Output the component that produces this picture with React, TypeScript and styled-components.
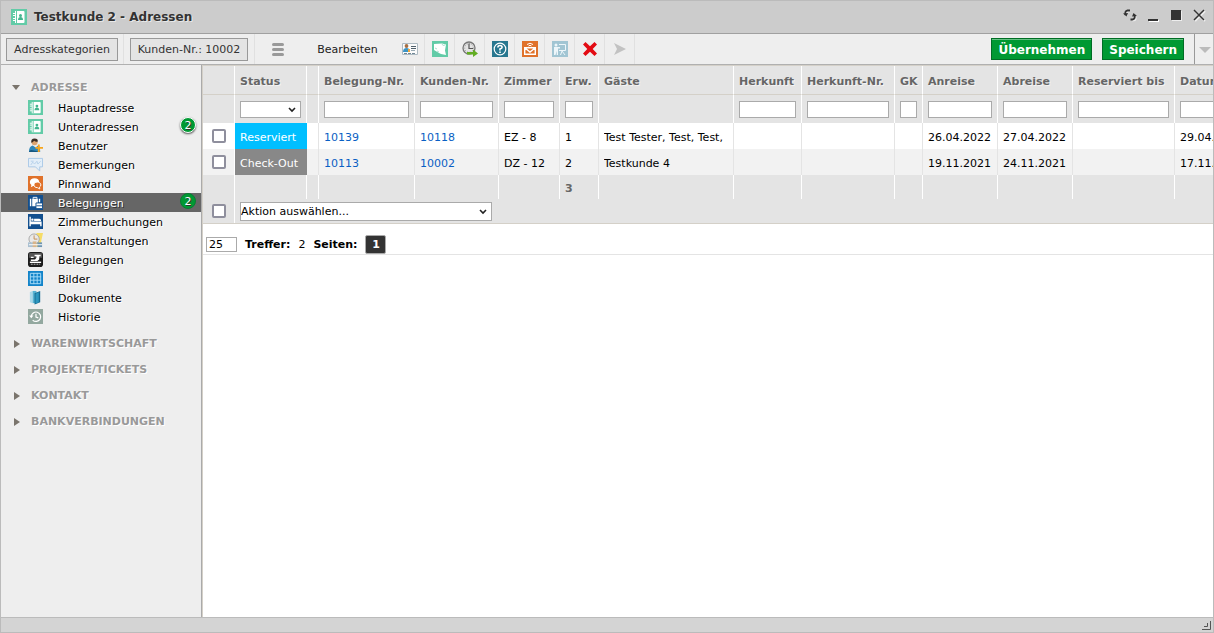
import React from "react";
import styled, { createGlobalStyle, css } from "styled-components";

const GlobalStyle = createGlobalStyle`
  *, *::before, *::after { box-sizing: border-box; }
  body {
    margin: 0;
    background: #fff;
    color: #000;
    font: 11px/14px "DejaVu Sans", Verdana, sans-serif;
  }
  button, input, select { font: inherit; color: inherit; }
  svg { display: block; flex: none; }
`;

/* ---------- window frame ---------- */

const Window = styled.div`
  display: flex;
  flex-direction: column;
  min-height: 100vh;
  border: 1px solid #bbb;
  overflow: hidden;
`;

const TitleBar = styled.header`
  display: flex;
  align-items: center;
  gap: 7px;
  height: 33px;
  padding: 0 6px 0 10px;
  background: #ccc;
  border-bottom: 1px solid #a0a0a0;
`;

const Title = styled.h1`
  flex: 1;
  margin: 0;
  font-size: 12px;
  line-height: 16px;
  font-weight: bold;
  color: #333;
  text-shadow: 1px 1px 0 #e8e8e8;
`;

const WindowControls = styled.div`
  display: flex;
  align-items: center;
  gap: 7px;
  padding-bottom: 4px;
`;

const IconButton = styled.button`
  display: flex;
  align-items: center;
  justify-content: center;
  width: 16px;
  height: 16px;
  padding: 0;
  border: 0;
  background: none;
`;

const Toolbar = styled.div`
  display: flex;
  align-items: stretch;
  height: 31px;
  background: #eee;
  border-bottom: 1px solid #b0b0b0;
`;

const ToolGroup = styled.div<{ $width?: number }>`
  display: flex;
  align-items: center;
  justify-content: center;
  width: ${(p) => (p.$width ? `${p.$width}px` : "auto")};
  border-right: 1px solid #e0e0e0;
`;

const PlainGroup = styled(ToolGroup)`
  border-right: 0;
`;

const Actions = styled.div`
  display: flex;
  align-items: center;
  gap: 10px;
  margin-left: auto;
  padding-right: 10px;
`;

const OutlineButton = styled.button`
  height: 23px;
  padding: 2px 7px 0;
  border: 1px solid #999;
  background: #e4e4e4;
  color: #333;
  white-space: nowrap;
`;

const TextButton = styled.button`
  padding: 2px 0 0;
  border: 0;
  background: none;
  color: #222;
`;

const GreenButton = styled.button`
  height: 22px;
  padding: 1px 6px 0;
  border: 1px solid #006d25;
  background: #093;
  box-shadow: inset 0 1px 0 #66c285;
  color: #fff;
  font-size: 12px;
  font-weight: bold;
  white-space: nowrap;
`;

const MoreButton = styled.button`
  display: flex;
  align-items: center;
  width: 19px;
  padding: 2px 0 0 4px;
  border: 0;
  border-left: 1px solid #999;
  background: none;
`;

const Body = styled.div`
  display: flex;
  flex: 1;
`;

const StatusBar = styled.footer`
  display: flex;
  justify-content: flex-end;
  align-items: flex-end;
  height: 15px;
  padding: 0 2px 2px 0;
  background: #d4d4d4;
  border-top: 1px solid #bbb;
`;

/* ---------- sidebar ---------- */

const Sidebar = styled.nav`
  flex: none;
  width: 201px;
  padding-top: 7px;
  background: #eee;
  border-right: 1px solid #aaa;
`;

const Section = styled.section`
  padding-top: 4px;
`;

const SectionToggle = styled.button`
  display: flex;
  align-items: center;
  gap: 10px;
  width: 100%;
  height: 22px;
  padding: 1px 0 0 10px;
  border: 0;
  background: none;
  color: #999;
  font-weight: bold;
  text-shadow: 1px 1px 0 #fff;
`;

const List = styled.ul`
  margin: 0;
  padding: 0 0 2px;
  list-style: none;
`;

const Item = styled.li`
  position: relative;
`;

const ItemLink = styled.a<{ $active?: boolean }>`
  display: flex;
  align-items: center;
  gap: 15px;
  height: 19px;
  padding-left: 27px;
  text-decoration: none;
  color: ${(p) => (p.$active ? "#fff" : "#000")};
  background: ${(p) => (p.$active ? "#666" : "transparent")};
  text-shadow: ${(p) => (p.$active ? "1px 1px 0 #333" : "1px 1px 0 #fff")};
`;

const ItemLabel = styled.span`
  padding-top: 2px;
`;

const Badge = styled.span<{ $active?: boolean }>`
  position: absolute;
  top: 0;
  right: 5px;
  width: 16px;
  height: 16px;
  border: ${(p) => (p.$active ? "1px solid #087d33" : "1px solid #fff")};
  border-radius: 50%;
  background: #093;
  box-shadow: ${(p) => (p.$active ? "none" : "0 1px 2px #555")};
  color: #fff;
  line-height: 15px;
  text-align: center;
  text-shadow: 1px 1px 0 #333;
`;

/* ---------- table ---------- */

const Main = styled.main`
  flex: 1;
  min-width: 0;
  overflow: hidden;
  background: #fff;
  border-left: 1px solid #d4d0c8;
`;

const Grid = styled.table`
  width: 100%;
  min-width: 1100px;
  table-layout: fixed;
  border-collapse: separate;
  border-spacing: 0;
  border-top: 1px solid #d4d0c8;
  border-bottom: 1px solid #d4d0c8;
  background: #e4e4e4;
`;

const cell = css`
  padding: 0 4px 0 5px;
  border-right: 1px solid #fff;
  text-align: left;
  white-space: nowrap;
  overflow: hidden;
`;

const HeadCell = styled.th`
  ${cell}
  height: 29px;
  padding-top: 4px;
  border-bottom: 1px solid #d4d0c8;
  color: #666;
  font-weight: bold;
  text-shadow: 1px 1px 0 #f4f4f4;
`;

const FilterCell = styled.td`
  ${cell}
  height: 28px;
  padding-right: 5px;
`;

const DataCell = styled.td<{ $fill?: string; $check?: boolean }>`
  ${cell}
  height: 26px;
  padding-top: ${(p) => (p.$check ? 0 : 3)}px;
  border-right-color: ${(p) => (p.$check ? "#fff" : "#e4e4e4")};
  ${(p) => p.$fill && `background: ${p.$fill}; color: #fff; border-right-color: ${p.$fill};`}
`;

const DataRow = styled.tr<{ $alt?: boolean }>`
  background: ${(p) => (p.$alt ? "#f2f2f2" : "#fff")};
`;

const ClipText = styled.div`
  overflow: hidden;
`;

const SumCell = styled.td`
  ${cell}
  height: 24px;
  padding-top: 3px;
  color: #666;
  font-weight: bold;
`;

const ActionCell = styled.td<{ $last?: boolean }>`
  ${cell}
  height: 24px;
  ${(p) => p.$last && "border-right: 0;"}
`;

const FilterInput = styled.input`
  display: block;
  width: 100%;
  height: 17px;
  padding: 0 2px;
  border: 1px solid #aaa;
  background: #fff;
`;

const CheckInput = styled.input.attrs({ type: "checkbox" })`
  display: block;
  appearance: none;
  width: 14px;
  height: 14px;
  margin: 0 0 0 4px;
  border: 2px solid #8f8f9d;
  border-radius: 2px;
  background: #fff;
`;

const SelectWrap = styled.div<{ $width?: number }>`
  position: relative;
  width: ${(p) => (p.$width ? `${p.$width}px` : "auto")};
  svg {
    position: absolute;
    top: 50%;
    right: 5px;
    margin-top: -2px;
    pointer-events: none;
  }
`;

const SelectInput = styled.select<{ $tall?: boolean }>`
  display: block;
  appearance: none;
  width: 100%;
  height: ${(p) => (p.$tall ? 19 : 17)}px;
  padding: 1px 16px 0 0;
  border: 1px solid #aaa;
  border-radius: 0;
  background: #fff;
`;

const CellLink = styled.a`
  color: #0a5fc4;
  text-decoration: none;
`;

const Pager = styled.div`
  display: flex;
  align-items: center;
  gap: 8px;
  height: 31px;
  padding: 10px 0 0 3px;
  border-bottom: 1px solid #e4e4e4;
`;

const PagerText = styled.span`
  display: flex;
  gap: 8px;
  padding-top: 2px;
`;

const CountInput = styled.input`
  width: 31px;
  height: 15px;
  padding: 1px 2px 0;
  border: 1px solid #aaa;
`;

const PageButton = styled.button`
  width: 21px;
  height: 19px;
  padding: 1px 0 0;
  border: 1px solid #aaa;
  border-radius: 2px;
  background: #333;
  color: #fff;
  font-weight: bold;
`;

/* ---------- icons ---------- */

type IconProps = { size?: number };

const Svg = ({ size = 15, children }: IconProps & { children: React.ReactNode }) => (
  <svg width={size} height={size} viewBox="0 0 16 16" aria-hidden="true">
    {children}
  </svg>
);

const AddressIcon = ({ size }: IconProps) => (
  <Svg size={size}>
    <path fill="#62cba7" d="M0 0h16v16H0z" />
    <path fill="#fff" d="M4 2h8.5q1 0 1 1v10q0 1-1 1H4z" />
    <path stroke="#fff" d="M2 4.5h3M2 6.5h3M2 9.5h3M2 11.5h3" />
    <path stroke="#62cba7" d="M5.5 2v12" />
    <circle cx="9.5" cy="6.5" r="1.5" fill="#43b58e" />
    <path fill="#43b58e" d="M7 11q0-3 2.500-3t2.500 3z" />
  </Svg>
);

const UserIcon = () => (
  <Svg>
    <circle cx="7" cy="4.500" r="3.200" fill="#dda46f" />
    <path fill="#3a2c24" d="M3.500 5Q3 .5 7 .5T10.300 4Q8 4.500 6.500 3 5 5 3.500 5z" />
    <path fill="#2f86b8" d="M1 15q0-6 4-7l3 2 3-2q2 1 2 7z" />
    <path fill="#17577f" d="M1 15q1-3 4-2l8 2z" />
    <path fill="#f7a51c" d="M10.500 7h2v2.500H16v2h-3.500V15h-2v-3.500H8v-2h2.500z" />
  </Svg>
);

const RemarkIcon = () => (
  <Svg>
    <path fill="#e3eef8" stroke="#a9c8e6" d="M.5 1.500h15v9h-3V15L8 10.500H.5z" />
    <path fill="none" stroke="#b5d0ea" d="M3 8.500l2-3 2 2 2.500-3 1 3 3-3M3 4.500h3" />
  </Svg>
);

const PinIcon = () => (
  <Svg>
    <path fill="#e0722b" d="M0 0h16v16H0z" />
    <path fill="#fff" d="M7 2.500c-3 0-5 1.700-5 4 0 1.400.6 2.300 1.600 3L3 12l2.500-1.400H7c3 0 5-1.700 5-4s-2-4.100-5-4.100z" />
    <path fill="#e0722b" stroke="#fff" d="M10 6.500c-2.200 0-3.700 1.200-3.700 3s1.500 2.900 3.700 2.900l2.500 1.400-.2-2c.9-.6 1.400-1.300 1.400-2.300 0-1.800-1.500-3-3.700-3z" />
  </Svg>
);

const LuggageIcon = () => (
  <Svg>
    <path fill="#124f8e" d="M0 0h16v16H0z" />
    <path fill="none" stroke="#fff" d="M5.500 4V2.500h4V4" />
    <path fill="#fff" d="M2 4h1.500v8H2zM4.500 4h6v8h-6zM11.500 4H13v4h-1.500z" />
    <path fill="#fff" stroke="#124f8e" d="M8.500 8.500h7v6h-7z" />
    <path stroke="#124f8e" d="M9 11.500h6" />
  </Svg>
);

const BedIcon = () => (
  <Svg>
    <path fill="#124f8e" d="M0 0h16v16H0z" />
    <path fill="#fff" d="M1.500 3H3v5h11.500v5H13v-2H3v2H1.500zM6.500 5H12q2 0 2 2.500H6.500z" />
    <circle cx="4.700" cy="6" r="1.300" fill="#fff" />
  </Svg>
);

const EventIcon = () => (
  <Svg>
    <path fill="#f6dc66" d="M9 0h7l-2 9 1 6H9z" />
    <circle cx="6.500" cy="6.500" r="5.500" fill="#e9e9e9" stroke="#a7a7a7" />
    <path fill="none" stroke="#c48b4d" d="M6.500 2.500v4H10" />
    <path fill="#a9bfd0" d="M0 10h9v5H0z" />
    <path fill="#d8b48a" d="M5 9h4v6H5z" />
    <path fill="#6e95b3" d="M10 10h5v5h-5z" />
    <path stroke="#fff" d="M1 12.500h14" />
  </Svg>
);

const DeskIcon = () => (
  <Svg>
    <rect width="16" height="16" rx="3" fill="#1c1c1c" />
    <path fill="#555" d="M2 1h12q1 0 1 2v3H1V3q0-2 1-2z" />
    <path fill="#fff" d="M7 3h6.500v1.500H12V8l-2 1.500H3V8h4.500L9 6V4.500H7zM3 5h3v1.500H3z" />
    <path stroke="#fff" strokeWidth="1.500" d="M2 11h12" />
    <path stroke="#ccc" strokeDasharray="2 1" d="M3 13h10" />
  </Svg>
);

const PicturesIcon = () => (
  <Svg>
    <path fill="#1384c9" d="M0 0h16v16H0z" />
    <path fill="none" stroke="#a6dcf8" d="M2.500 2.500h11v11h-11zM6.200 2v12M9.800 2v12M2 6.200h12M2 9.800h12" />
  </Svg>
);

const DocumentsIcon = () => (
  <Svg>
    <path fill="#a9d9ea" d="M2 2l3-1v13l-3-1z" />
    <path fill="#56b2d2" d="M5 1h4v13H5z" />
    <path fill="#146c93" d="M7 3.500L13 1v12l-6 2.500z" />
    <path fill="#2c97bf" d="M8 4l3.500-1.500V13L8 14.500z" />
  </Svg>
);

const HistoryIcon = () => (
  <Svg>
    <path fill="#93a89f" d="M0 0h16v16H0z" />
    <path fill="none" stroke="#fff" strokeWidth="1.300" d="M3.500 8A5 5 0 1 1 5 11.800M8.500 5v3.500l2.500 1" />
    <path fill="#fff" d="M1.300 7h4.400L3.500 9.800z" />
  </Svg>
);

const CardIcon = () => (
  <Svg size={16}>
    <path fill="#fbfbfb" stroke="#aebbc3" d="M.5 2.500h15v11H.5z" />
    <circle cx="4.500" cy="5" r="1.900" fill="#a66f43" />
    <path fill="#3b94c5" d="M1 11q0-4 3.500-4T8 11z" />
    <path fill="#f0a73a" d="M6 8h2v3H6z" />
    <path stroke="#50606b" d="M9 5.500h5M9 7.500h5" />
    <path stroke="#708795" strokeDasharray="3 1" d="M2 12.500h12" />
    <path stroke="#9aabb5" d="M9 9.500h4" />
  </Svg>
);

const NoteIcon = () => (
  <Svg size={16}>
    <path fill="#62cba7" d="M0 0h16v16H0z" />
    <path fill="#fff" d="M2 3l8-.5 4 1-1 6 1 4.500-5-1-2-1-5-3z" />
    <path fill="none" stroke="#a9e2cf" d="M10 3l1 1.500 2-.5M3 7l2 1M5 10l2 1" />
  </Svg>
);

const ClockIcon = () => (
  <Svg size={16}>
    <circle cx="7" cy="7" r="6" fill="#e4e4e4" stroke="#777" strokeWidth="1.300" />
    <circle cx="7" cy="7" r="4.300" fill="none" stroke="#999" strokeDasharray="1 1.500" />
    <path fill="none" stroke="#555" strokeWidth="1.200" d="M7 2.500v5h4" />
    <path fill="#62ad22" d="M5 11h6V8.500l5 4-5 3.500v-2.500H5z" />
  </Svg>
);

const HelpIcon = () => (
  <Svg size={16}>
    <path fill="#28778f" d="M0 0h16v16H0z" />
    <circle cx="8" cy="8" r="5.800" fill="none" stroke="#fff" strokeWidth="1.200" />
    <path fill="none" stroke="#fff" strokeWidth="1.600" d="M5.900 6.500q0-2 2.100-2t2.100 1.800Q10.100 7.500 8 8v1.500M8 10.500V12" />
  </Svg>
);

const MailIcon = () => (
  <Svg size={16}>
    <path fill="#e0722b" d="M0 0h16v16H0z" />
    <path fill="none" stroke="#fff" strokeWidth="1.400" d="M2.700 6.700h10.600v6.600H2.700zM3 7l5 4 5-4" />
    <path fill="none" stroke="#fff" d="M5 3.500q3-2.500 6 0M6.500 5q1.500-1.500 3 0" />
  </Svg>
);

const TrainingIcon = () => (
  <Svg size={16}>
    <path fill="#a1c5d3" d="M0 0h16v16H0z" />
    <circle cx="4" cy="4" r="1.500" fill="#edf6fa" />
    <path fill="#edf6fa" d="M2 6h6v1.500H6V14H4.700v-4L3.500 14H2z" />
    <path fill="none" stroke="#edf6fa" d="M7 3.500h6.500v6H7M8.500 14l1.500-4 3 4" />
  </Svg>
);

const DeleteIcon = () => (
  <Svg size={16}>
    <path fill="#e30b13" d="M1 3.500L3.500 1 8 5.300 12.500 1 15 3.500 10.700 8l4.300 4.500-2.500 2.500L8 10.700 3.500 15 1 12.500 5.300 8z" />
  </Svg>
);

const SendIcon = () => (
  <Svg size={16}>
    <path fill="#c2c2c2" d="M2 2l12 6-12 6 3-6z" />
  </Svg>
);

const MenuIcon = () => (
  <svg width="12" height="13" viewBox="0 0 12 13" aria-hidden="true">
    <path stroke="#999" strokeWidth="3" strokeLinecap="round" d="M1.500 1.500h9M1.500 6.500h9M1.500 11.500h9" />
  </svg>
);

const Chevron = () => (
  <svg width="8" height="6" viewBox="0 0 8 6" aria-hidden="true">
    <path fill="none" stroke="#222" strokeWidth="1.600" d="M1 1l3 3 3-3" />
  </svg>
);

const Caret = ({ open }: { open?: boolean }) => (
  <svg width="10" height="10" viewBox="0 0 10 10" aria-hidden="true">
    <path fill="#7a746c" d={open ? "M1 2h8L5 7z" : "M3 1l6 4-6 4z"} />
  </svg>
);

const ReloadIcon = () => (
  <Svg size={16}>
    <g fill="none" stroke="#eee" strokeWidth="1.600" transform="translate(1 1)">
      <path d="M7 3.500H5Q2.500 4 3.500 8M9 12.500h2Q13.500 12 12.500 8" />
    </g>
    <path fill="none" stroke="#333" strokeWidth="1.800" d="M8 3.500H5.500Q2.500 4 3.500 8M8.500 12.500h2Q13.500 12 12.500 8" />
    <path fill="#333" d="M1 6.500l5-.5-1.500 3.500zM10 9.500L15 9l-3.500-3z" />
  </Svg>
);

/* ---------- data ---------- */

const navItems = [
  { label: "Hauptadresse", icon: <AddressIcon /> },
  { label: "Unteradressen", icon: <AddressIcon />, count: 2 },
  { label: "Benutzer", icon: <UserIcon /> },
  { label: "Bemerkungen", icon: <RemarkIcon /> },
  { label: "Pinnwand", icon: <PinIcon /> },
  { label: "Belegungen", icon: <LuggageIcon />, count: 2, active: true },
  { label: "Zimmerbuchungen", icon: <BedIcon /> },
  { label: "Veranstaltungen", icon: <EventIcon /> },
  { label: "Belegungen", icon: <DeskIcon /> },
  { label: "Bilder", icon: <PicturesIcon /> },
  { label: "Dokumente", icon: <DocumentsIcon /> },
  { label: "Historie", icon: <HistoryIcon /> },
];

const closedSections = ["WARENWIRTSCHAFT", "PROJEKTE/TICKETS", "KONTAKT", "BANKVERBINDUNGEN"];

const tools = [
  { label: "Visitenkarte", icon: <CardIcon /> },
  { label: "Notiz", icon: <NoteIcon /> },
  { label: "Wiedervorlage", icon: <ClockIcon /> },
  { label: "Hilfe", icon: <HelpIcon /> },
  { label: "E-Mail", icon: <MailIcon /> },
  { label: "Schulung", icon: <TrainingIcon /> },
  { label: "Löschen", icon: <DeleteIcon /> },
  { label: "Senden", icon: <SendIcon /> },
];

type Column = { label: string; width?: number; filter: "input" | "select" | "none" };

const columns: Column[] = [
  { label: "Status", width: 72, filter: "select" },
  { label: "", width: 12, filter: "none" },
  { label: "Belegung-Nr.", width: 96, filter: "input" },
  { label: "Kunden-Nr.", width: 84, filter: "input" },
  { label: "Zimmer", width: 61, filter: "input" },
  { label: "Erw.", width: 39, filter: "input" },
  { label: "Gäste", width: 135, filter: "none" },
  { label: "Herkunft", width: 68, filter: "input" },
  { label: "Herkunft-Nr.", width: 93, filter: "input" },
  { label: "GK", width: 28, filter: "input" },
  { label: "Anreise", width: 75, filter: "input" },
  { label: "Abreise", width: 75, filter: "input" },
  { label: "Reserviert bis", width: 102, filter: "input" },
  { label: "Datum", filter: "input" },
];

const bookings = [
  {
    status: "Reserviert", color: "#00bfff", booking: "10139", customer: "10118", room: "EZ - 8",
    adults: 1, guests: "Test Tester, Test, Test,", from: "26.04.2022", to: "27.04.2022", date: "29.04.2022",
  },
  {
    status: "Check-Out", color: "#888", booking: "10113", customer: "10002", room: "DZ - 12",
    adults: 2, guests: "Testkunde 4", from: "19.11.2021", to: "24.11.2021", date: "17.11.2021",
  },
];

/* ---------- view ---------- */

const BookingTable = () => (
  <Grid>
    <colgroup>
      <col width={32} />
      {columns.map((c, i) => (
        <col key={i} width={c.width} />
      ))}
    </colgroup>
    <thead>
      <tr>
        <HeadCell />
        {columns.map((c, i) => (
          <HeadCell key={i} scope="col">{c.label}</HeadCell>
        ))}
      </tr>
      <tr>
        <FilterCell />
        {columns.map((c, i) => (
          <FilterCell key={i}>
            {c.filter === "input" && <FilterInput aria-label={c.label} />}
            {c.filter === "select" && (
              <SelectWrap $width={61}>
                <SelectInput aria-label={c.label}>
                  <option />
                </SelectInput>
                <Chevron />
              </SelectWrap>
            )}
          </FilterCell>
        ))}
      </tr>
    </thead>
    <tbody>
      {bookings.map((b, i) => (
        <DataRow key={b.booking} $alt={i % 2 === 1}>
          <DataCell $check><CheckInput aria-label={b.booking} /></DataCell>
          <DataCell $fill={b.color}>{b.status}</DataCell>
          <DataCell />
          <DataCell><CellLink href="#">{b.booking}</CellLink></DataCell>
          <DataCell><CellLink href="#">{b.customer}</CellLink></DataCell>
          <DataCell>{b.room}</DataCell>
          <DataCell>{b.adults}</DataCell>
          <DataCell><ClipText>{b.guests}</ClipText></DataCell>
          <DataCell />
          <DataCell />
          <DataCell />
          <DataCell>{b.from}</DataCell>
          <DataCell>{b.to}</DataCell>
          <DataCell />
          <DataCell>{b.date}</DataCell>
        </DataRow>
      ))}
    </tbody>
    <tfoot>
      <tr>
        <SumCell />
        {columns.map((c, i) => (
          <SumCell key={i}>{c.label === "Erw." ? 3 : null}</SumCell>
        ))}
      </tr>
      <tr>
        <ActionCell><CheckInput aria-label="Alle auswählen" /></ActionCell>
        <ActionCell $last colSpan={columns.length}>
          <SelectWrap $width={252}>
            <SelectInput $tall aria-label="Aktion">
              <option>Aktion auswählen...</option>
            </SelectInput>
            <Chevron />
          </SelectWrap>
        </ActionCell>
      </tr>
    </tfoot>
  </Grid>
);

export default function App() {
  return (
    <>
      <GlobalStyle />
      <Window>
        <TitleBar>
          <AddressIcon size={16} />
          <Title>Testkunde 2 - Adressen</Title>
          <WindowControls>
            <IconButton aria-label="Neu laden"><ReloadIcon /></IconButton>
            <IconButton aria-label="Minimieren">
              <Svg size={16}><path fill="#fff" d="M4 13h10v2H4z" /><path fill="#333" d="M3 12h10v2H3z" /></Svg>
            </IconButton>
            <IconButton aria-label="Maximieren">
              <Svg size={16}><path fill="#eee" d="M4 4h10v10H4z" /><path fill="#333" d="M3 3h10v10H3z" /></Svg>
            </IconButton>
            <IconButton aria-label="Schließen">
              <Svg size={16}>
                <path stroke="#eee" strokeWidth="2" d="M4 4l10 10M14 4L4 14" />
                <path stroke="#333" strokeWidth="1.500" d="M3 3l10 10M13 3L3 13" />
              </Svg>
            </IconButton>
          </WindowControls>
        </TitleBar>

        <Toolbar>
          <ToolGroup $width={123}><OutlineButton>Adresskategorien</OutlineButton></ToolGroup>
          <ToolGroup $width={131}><OutlineButton>Kunden-Nr.: 10002</OutlineButton></ToolGroup>
          <PlainGroup $width={45}>
            <IconButton aria-label="Menü"><MenuIcon /></IconButton>
          </PlainGroup>
          <PlainGroup $width={95}><TextButton>Bearbeiten</TextButton></PlainGroup>
          {tools.map((t) => (
            <ToolGroup key={t.label} $width={30}>
              <IconButton aria-label={t.label}>{t.icon}</IconButton>
            </ToolGroup>
          ))}
          <Actions>
            <GreenButton>Übernehmen</GreenButton>
            <GreenButton>Speichern</GreenButton>
          </Actions>
          <MoreButton aria-label="Mehr">
            <svg width="12" height="6" viewBox="0 0 12 6" aria-hidden="true">
              <path fill="#bbb" d="M0 0h12L6 6z" />
            </svg>
          </MoreButton>
        </Toolbar>

        <Body>
          <Sidebar>
            <Section>
              <SectionToggle aria-expanded="true"><Caret open />ADRESSE</SectionToggle>
              <List>
                {navItems.map((n, i) => (
                  <Item key={i}>
                    <ItemLink href="#" $active={n.active}>
                      {n.icon}
                      <ItemLabel>{n.label}</ItemLabel>
                    </ItemLink>
                    {n.count && <Badge $active={n.active}>{n.count}</Badge>}
                  </Item>
                ))}
              </List>
            </Section>
            {closedSections.map((s) => (
              <Section key={s}>
                <SectionToggle aria-expanded="false"><Caret />{s}</SectionToggle>
              </Section>
            ))}
          </Sidebar>
          <Main>
            <BookingTable />
            <Pager>
              <CountInput aria-label="Treffer pro Seite" defaultValue="25" />
              <PagerText>
                <b>Treffer:</b>
                <span>2</span>
                <b>Seiten:</b>
              </PagerText>
              <PageButton>1</PageButton>
            </Pager>
          </Main>
        </Body>

        <StatusBar>
          <svg width="9" height="9" viewBox="0 0 9 9" aria-hidden="true">
            <path fill="none" stroke="#555" d="M8.500 0v8.500H0M5.500 2v3.500H2" />
          </svg>
        </StatusBar>
      </Window>
    </>
  );
}
